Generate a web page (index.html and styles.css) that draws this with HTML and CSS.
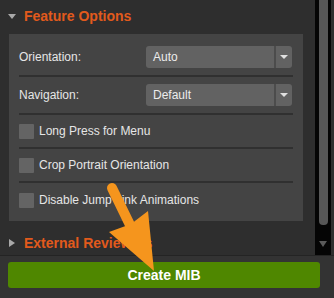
FILE: index.html
```html
<!DOCTYPE html>
<html>
<head>
<meta charset="utf-8">
<link rel="stylesheet" href="styles.css">
</head>
<body>
<div class="app">
  <div class="scroll-area">
    <div class="content">
      <div class="section-head">
        <span class="tri-down"></span>
        <span class="section-title">Feature Options</span>
      </div>
      <div class="panel">
        <div class="row select-row">
          <span class="label">Orientation:</span>
          <div class="select"><span class="select-text">Auto</span><span class="select-btn"><span class="caret"></span></span></div>
        </div>
        <div class="row select-row">
          <span class="label">Navigation:</span>
          <div class="select"><span class="select-text">Default</span><span class="select-btn"><span class="caret"></span></span></div>
        </div>
        <div class="row check-row">
          <span class="checkbox"></span><span class="label">Long Press for Menu</span>
        </div>
        <div class="row check-row">
          <span class="checkbox"></span><span class="label">Crop Portrait Orientation</span>
        </div>
        <div class="row check-row last">
          <span class="checkbox"></span><span class="label">Disable Jump Link Animations</span>
        </div>
      </div>
      <div class="section-head collapsed">
        <span class="tri-right"></span>
        <span class="section-title">External Reviewers</span>
      </div>
    </div>
    <div class="scrollbar">
      <div class="thumb"></div>
      <div class="down-arrow"></div>
    </div>
    <div class="edge"></div>
  </div>
  <div class="footer">
    <button class="create-btn">Create MIB</button>
  </div>
  <svg class="annotation" width="334" height="298" viewBox="0 0 334 298">
    <line x1="112" y1="188" x2="131" y2="227" stroke="#f5951d" stroke-width="10" stroke-linecap="round"/>
    <path d="M109 232 L131 224 L148 211 L154 271 Z" fill="#f5951d"/>
  </svg>
</div>
</body>
</html>
```
FILE: styles.css
```css
* { box-sizing: border-box; }
html, body { margin: 0; padding: 0; }
body {
  background: #2e2e2e;
  font-family: "Liberation Sans", Arial, sans-serif;
  color: #e4e4e4;
  width: 334px;
  height: 298px;
  overflow: hidden;
}
.app {
  position: relative;
  width: 334px;
  height: 298px;
  display: flex;
  flex-direction: column;
}
.scroll-area {
  height: 255px;
  display: flex;
  flex-direction: row;
}
.content {
  width: 315px;
  height: 255px;
  overflow: hidden;
}
.section-head {
  height: 32px;
  display: flex;
  align-items: center;
  padding-left: 8px;
  margin-bottom: 2px;
}
.section-head.collapsed {
  height: 34px;
  margin-top: 5px;
  padding-left: 9px;
}
.tri-down {
  width: 0; height: 0;
  border-left: 4px solid transparent;
  border-right: 4px solid transparent;
  border-top: 5px solid #a9a9a9;
  margin-right: 8px;
  margin-top: 1px;
}
.tri-right {
  width: 0; height: 0;
  border-top: 4.5px solid transparent;
  border-bottom: 4.5px solid transparent;
  border-left: 6px solid #a9a9a9;
  margin-right: 9px;
}
.section-title {
  color: #e25a1c;
  font-weight: bold;
  font-size: 14px;
}
.panel {
  margin: 0 12px 0 9px;
  background: #444444;
  padding: 5px 10px 4px;
}
.row {
  border-bottom: 2px solid #303030;
  font-size: 12px;
}
.row.last { border-bottom: none; }
.select-row {
  display: grid;
  grid-template-columns: 127px 146px;
  align-items: center;
  padding: 7px 0;
}
.select {
  height: 22px;
  background: #626262;
  border-radius: 3px;
  display: flex;
  align-items: stretch;
}
.select-text {
  flex: 1;
  display: flex;
  align-items: center;
  padding-left: 7px;
  color: #ececec;
  font-size: 12px;
}
.select-btn {
  width: 18px;
  border-left: 2px solid #4c4c4c;
  display: flex;
  align-items: center;
  justify-content: center;
}
.caret {
  width: 0; height: 0;
  border-left: 4px solid transparent;
  border-right: 4px solid transparent;
  border-top: 4px solid #e0e0e0;
}
.check-row {
  height: 34px;
  display: flex;
  align-items: center;
  gap: 5px;
}
.checkbox {
  width: 15px;
  height: 15px;
  background: #646464;
  border-radius: 1px;
}
.label { color: #e6e6e6; }
.scrollbar {
  width: 16px;
  height: 255px;
  background: #050505;
  position: relative;
  padding-left: 4px;
}
.thumb {
  width: 9px;
  height: 225px;
  background: #575757;
  border-radius: 0 0 4px 4px;
}
.down-arrow {
  width: 0; height: 0;
  margin: 16px 0 0 0;
  border-left: 4px solid transparent;
  border-right: 4px solid transparent;
  border-top: 6px solid #5a5a5a;
}
.edge { flex: 1; background: #2e2e2e; }
.footer {
  flex: 1;
  border-top: 1px solid #242424;
  background: #333333;
  padding: 6px 14px 0 8px;
}
.create-btn {
  display: block;
  width: 100%;
  height: 26px;
  border: none;
  border-radius: 3px;
  background: #4f8700;
  color: #ffffff;
  font-family: "Liberation Sans", Arial, sans-serif;
  font-weight: bold;
  font-size: 14px;
  padding: 0;
}
.annotation {
  position: absolute;
  left: 0;
  top: 0;
  pointer-events: none;
}
```
